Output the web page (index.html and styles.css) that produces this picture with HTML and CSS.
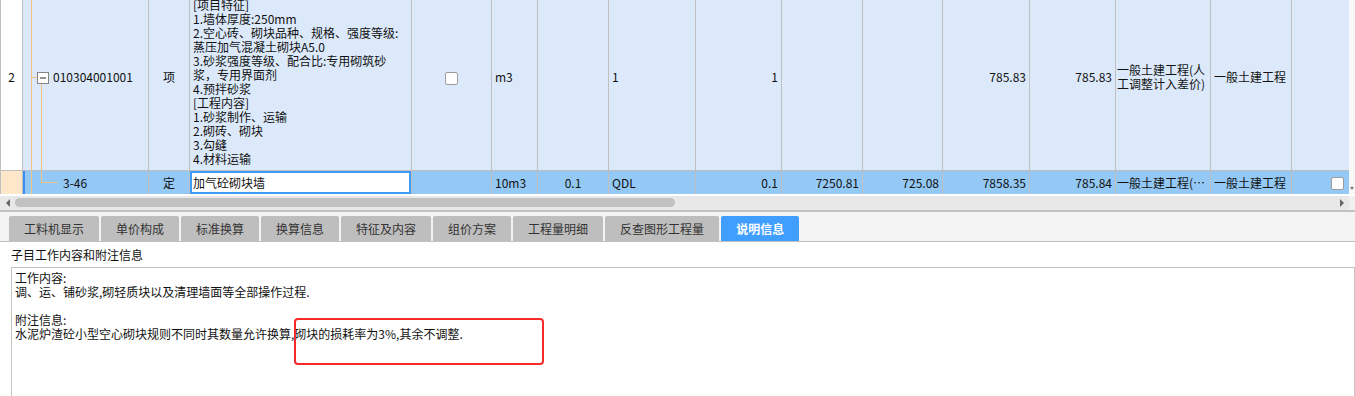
FILE: index.html
```html
<!DOCTYPE html>
<html lang="zh-CN">

<head>
  <meta charset="UTF-8">
  <meta name="viewport" content="width=device-width, initial-scale=1.0">
  <title>子目说明信息</title>

  <link rel="stylesheet" href="styles.css">
</head>

<body>
  <section class="grid-area">
    <div class="grid-clip">
      <table class="grid">
        <colgroup>
          <col style="width: 22px">
          <col style="width: 126px">
          <col style="width: 41px">
          <col style="width: 222px">
          <col style="width: 80px">
          <col style="width: 46px">
          <col style="width: 71px">
          <col style="width: 87px">
          <col style="width: 86px">
          <col style="width: 81px">
          <col style="width: 80px">
          <col style="width: 87px">
          <col style="width: 86px">
          <col style="width: 95px">
          <col style="width: 81px">
          <col style="width: 58px">
        </colgroup>
        <tr class="row-item">
          <td class="num">2</td>
          <td class="tree tree-parent">
            <svg class="toggle" width="12" height="12" viewBox="0 0 12 12">
              <rect x="0.5" y="0.5" width="11" height="11" fill="#fff" stroke="#858585" />
              <line x1="3" y1="6" x2="9" y2="6" stroke="#222" />
            </svg>010304001001
          </td>
          <td class="center">项</td>
          <td class="desc">
            [项目特征]<br>
            1.墙体厚度:250mm<br>
            2.空心砖、砌块品种、规格、强度等级:<br>
            蒸压加气混凝土砌块A5.0<br>
            3.砂浆强度等级、配合比:专用砌筑砂<br>
            浆，专用界面剂<br>
            4.预拌砂浆<br>
            [工程内容]<br>
            1.砂浆制作、运输<br>
            2.砌砖、砌块<br>
            3.勾缝<br>
            4.材料运输
          </td>
          <td class="center"><span class="check"></span></td>
          <td>m3</td>
          <td></td>
          <td>1</td>
          <td class="right">1</td>
          <td></td>
          <td></td>
          <td class="right">785.83</td>
          <td class="right">785.83</td>
          <td class="wrap">一般土建工程(人<br>工调整计入差价)</td>
          <td>一般土建工程</td>
          <td></td>
        </tr>
        <tr class="row-quota">
          <td class="num"></td>
          <td class="tree tree-child">3-46</td>
          <td class="center">定</td>
          <td class="edit-cell"><div class="edit">加气砼砌块墙</div></td>
          <td></td>
          <td>10m3</td>
          <td class="center">0.1</td>
          <td>QDL</td>
          <td class="right">0.1</td>
          <td class="right">7250.81</td>
          <td class="right">725.08</td>
          <td class="right">7858.35</td>
          <td class="right">785.84</td>
          <td class="clip">一般土建工程(人工调整计入差价)</td>
          <td>一般土建工程</td>
          <td class="right"><span class="check"></span></td>
        </tr>
      </table>
    </div>
    <div class="vscroll"><span class="arrow-down"></span></div>
  </section>

  <div class="hscroll">
    <span class="hscroll-btn"><span class="arrow-left"></span></span>
    <div class="hscroll-track"><div class="hscroll-thumb"></div></div>
    <span class="hscroll-btn"><span class="arrow-right"></span></span>
    <span class="hscroll-corner"></span>
  </div>

  <nav class="tabs">
    <span class="tab">工料机显示</span>
    <span class="tab">单价构成</span>
    <span class="tab">标准换算</span>
    <span class="tab">换算信息</span>
    <span class="tab">特征及内容</span>
    <span class="tab">组价方案</span>
    <span class="tab">工程量明细</span>
    <span class="tab">反查图形工程量</span>
    <span class="tab active">说明信息</span>
  </nav>

  <section class="panel">
    <div class="panel-title">子目工作内容和附注信息</div>
    <div class="note-box">
      <p>工作内容:<br>调、运、铺砂浆,砌轻质块以及清理墙面等全部操作过程.</p>
      <p>附注信息:<br>水泥炉渣砼小型空心砌块规则不同时其数量允许换算,砌块的损耗率为3%,其余不调整.</p>
      <div class="mark"></div>
    </div>
  </section>
</body>

</html>
```

FILE: styles.css
```css
* {
  margin: 0;
  padding: 0;
  box-sizing: border-box;
}

body {
  font-family: "Noto Sans CJK SC", sans-serif;
  font-size: 12px;
  color: #111;
  background: #fff;
  overflow: hidden;
}

/* grid */

.grid-area {
  display: flex;
}

.grid-clip {
  width: 1349px;
  height: 194px;
  overflow: hidden;
}

.grid {
  width: 1349px;
  margin-top: -17px;
  table-layout: fixed;
  border-collapse: collapse;
}

.grid td {
  border: 1px solid #bfbfbf;
  padding: 0 3px;
  white-space: nowrap;
  overflow: hidden;
  line-height: 14px;
}

.row-item td {
  background: #dce9fb;
}

.row-quota td {
  height: 23px;
  background: #94c8f5;
}

.grid td.num {
  text-align: center;
  background: #fff;
}

.row-quota td.num {
  background: #fee6c8;
}

.center {
  text-align: center;
}

.right {
  text-align: right;
}

.grid td.desc {
  padding: 14px 3px 4px;
  vertical-align: top;
}

.grid td.wrap {
  padding: 0 1px;
}

.grid td.clip {
  text-overflow: ellipsis;
  padding: 0 1px;
}

.grid td.tree-parent {
  padding-left: 14px;
  background:
    linear-gradient(#f3c384, #f3c384) 8px 0 / 1px 100% no-repeat,
    linear-gradient(#f3c384, #f3c384) 8px 50% / 6px 1px no-repeat,
    linear-gradient(#f3c384, #f3c384) 18px 100% / 1px calc(50% - 6px) no-repeat,
    #dce9fb;
}

.grid td.tree-child {
  padding-left: 40px;
  box-shadow: inset 2px 0 #3a8ff0;
  background:
    linear-gradient(#f3c384, #f3c384) 8px 0 / 1px 100% no-repeat,
    linear-gradient(#f3c384, #f3c384) 18px 0 / 1px 50% no-repeat,
    linear-gradient(#f3c384, #f3c384) 18px 50% / 17px 1px no-repeat,
    #94c8f5;
}

.toggle {
  vertical-align: -2px;
  margin-right: 4px;
}

.check {
  display: inline-block;
  width: 13px;
  height: 13px;
  border: 1px solid #9c9c9c;
  border-radius: 2px;
  background: #fff;
  vertical-align: middle;
}

.row-quota .right .check {
  margin-right: 2px;
}

.grid td.edit-cell {
  padding: 0;
}

.edit {
  height: 23px;
  border: 2px solid #3f9bf8;
  background: #fff;
  line-height: 19px;
  padding-left: 1px;
}

.vscroll {
  width: 6px;
  height: 194px;
  background: #f7f7f7;
  display: flex;
  align-items: flex-end;
  justify-content: center;
  padding-bottom: 4px;
}

.arrow-down {
  border-top: 3px solid #777;
  border-left: 2px solid transparent;
  border-right: 2px solid transparent;
}

/* horizontal scrollbar */

.hscroll {
  display: flex;
  height: 14px;
  margin-top: 2px;
  background: #e8e8e8;
}

.hscroll-btn {
  width: 14px;
  display: flex;
  align-items: center;
  justify-content: center;
}

.hscroll-btn:first-child {
  width: 15px;
}

.arrow-left {
  border-right: 4px solid #666;
  border-top: 4px solid transparent;
  border-bottom: 4px solid transparent;
}

.arrow-right {
  border-left: 4px solid #666;
  border-top: 4px solid transparent;
  border-bottom: 4px solid transparent;
}

.hscroll-track {
  flex: 1;
  padding-top: 2px;
}

.hscroll-thumb {
  width: 660px;
  height: 9px;
  border-radius: 5px;
  background: #c1c1c1;
}

.hscroll-corner {
  width: 6px;
  background: #f0f0f0;
}

/* tabs */

.tabs {
  display: flex;
  gap: 2px;
  padding: 4px 9px 0;
  background: #f4f4f4;
  border-top: 2px solid #c2c2c2;
  border-bottom: 1px solid #c0c0c0;
}

.tab {
  height: 25px;
  line-height: 25px;
  padding: 0 15px;
  background: #bebebe;
  color: #333;
  border-radius: 2px 2px 0 0;
}

.tab.active {
  background: #409eff;
  color: #fff;
  font-weight: bold;
}

/* note panel */

.panel {
  padding-left: 11px;
}

.panel-title {
  height: 25px;
  line-height: 26px;
}

.note-box {
  position: relative;
  height: 140px;
  border: 1px solid #c4c4c4;
  padding: 3px 3px;
  line-height: 14px;
}

.note-box p {
  margin-bottom: 14px;
}

.mark {
  position: absolute;
  left: 282px;
  top: 50px;
  width: 250px;
  height: 47px;
  border: 2px solid #f52a2a;
  border-radius: 4px;
}
```
